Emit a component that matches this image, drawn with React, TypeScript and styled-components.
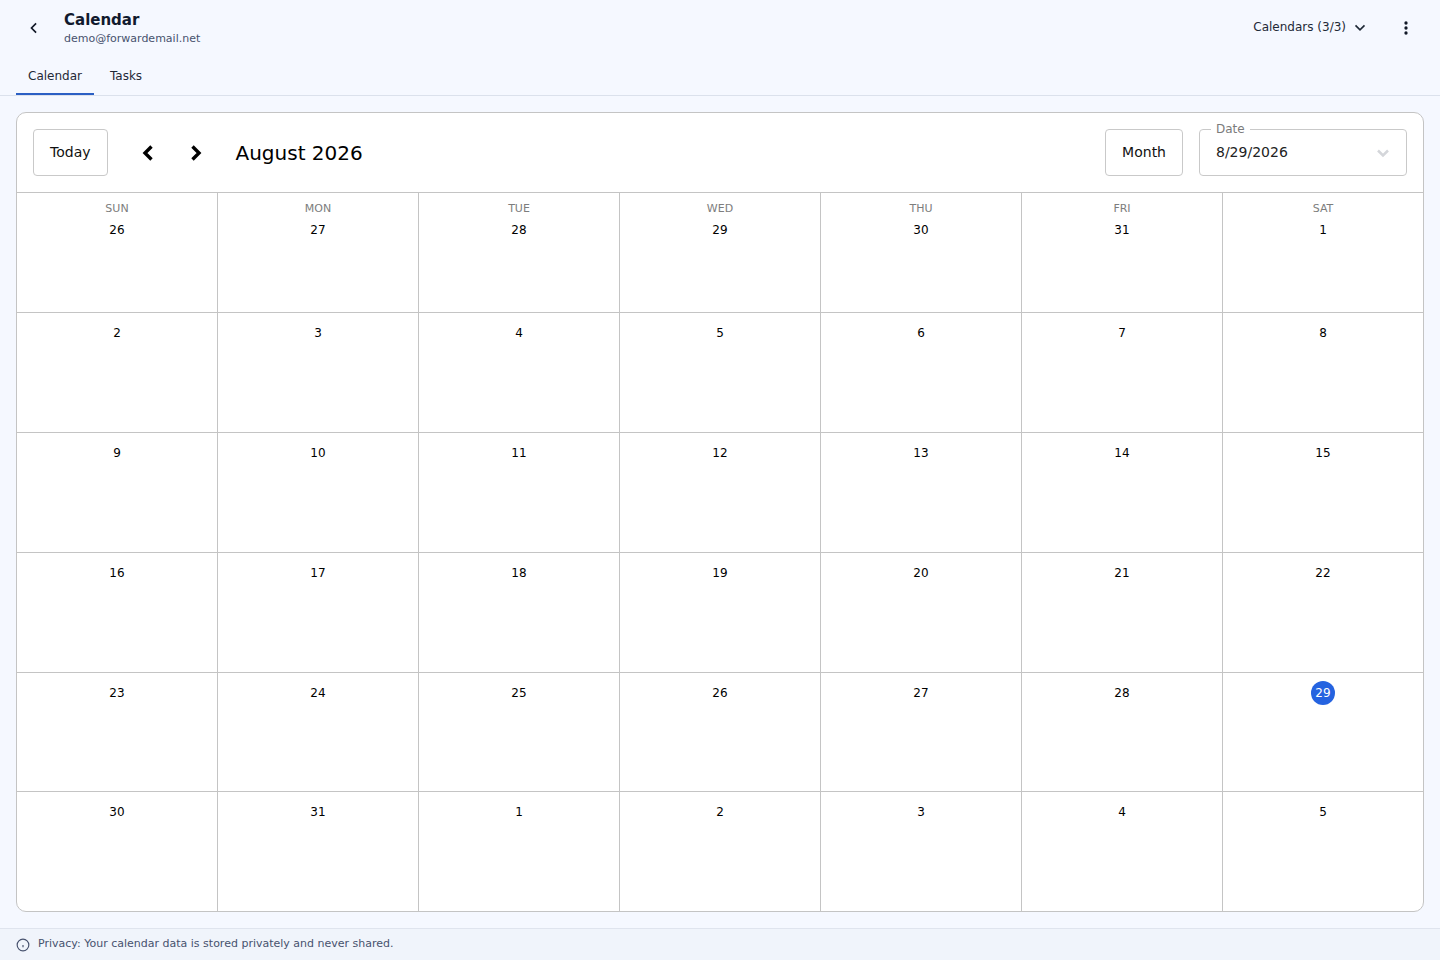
import React from 'react';
import styled, { createGlobalStyle } from 'styled-components';

const GlobalStyle = createGlobalStyle`
  html, body {
    margin: 0;
    padding: 0;
    height: 100%;
    background: #f5f8ff;
    font-family: "DejaVu Sans", sans-serif;
  }
  * {
    box-sizing: border-box;
  }
`;

const Page = styled.div`
  display: flex;
  flex-direction: column;
  width: 1440px;
  height: 960px;
  overflow: hidden;
  background: #f5f8ff;
`;

const Header = styled.header`
  height: 96px;
  flex: none;
  border-bottom: 1px solid #dbe1ec;
`;

const TopBar = styled.div`
  display: flex;
  align-items: flex-start;
  height: 56px;
  padding: 10px 16px 0 16px;
`;

const IconButton = styled.button`
  display: flex;
  align-items: center;
  justify-content: center;
  width: 36px;
  height: 36px;
  padding: 0;
  border: none;
  background: none;
  color: #111827;
`;

const TitleBlock = styled.div`
  margin-left: 12px;
  flex: 1;
`;

const Title = styled.div`
  font-size: 15px;
  line-height: 21px;
  font-weight: 700;
  color: #111a2e;
`;

const Email = styled.div`
  font-size: 11px;
  line-height: 16px;
  color: #47526e;
`;

const CalendarsButton = styled.button`
  display: flex;
  align-items: center;
  gap: 5px;
  height: 36px;
  margin-right: 11px;
  padding: 0 8px;
  border: none;
  background: none;
  font: inherit;
  font-size: 12px;
  color: #1f2937;
`;

const CalendarsLabel = styled.span`
  margin-bottom: 3px;
`;

const Tabs = styled.nav`
  display: flex;
  height: 39px;
  padding-left: 16px;
`;

const Tab = styled.div<{ $active?: boolean }>`
  display: flex;
  align-items: center;
  justify-content: center;
  height: 39px;
  padding: 3px 12px 1px;
  margin-right: ${(p) => (p.$active ? '4px' : '0')};
  font-size: 12px;
  color: #1f2937;
  border-bottom: 2px solid ${(p) => (p.$active ? '#2b5fc4' : 'transparent')};
`;

const Main = styled.main`
  flex: 1;
  padding: 16px;
  min-height: 0;
`;

const Card = styled.section`
  display: flex;
  flex-direction: column;
  height: 800px;
  background: #fff;
  border: 1px solid #c4c4c4;
  border-radius: 10px;
  overflow: hidden;
`;

const Toolbar = styled.div`
  display: flex;
  align-items: flex-start;
  height: 80px;
  flex: none;
  padding: 16px 16px 0;
  border-bottom: 1px solid #c4c4c4;
`;

const OutlineButton = styled.button`
  height: 47px;
  padding: 0 16px 2px;
  border: 1px solid #c9c9c9;
  border-radius: 4px;
  background: #fff;
  font: inherit;
  font-size: 14px;
  color: #111;
`;

const NavGroup = styled.div`
  display: flex;
  align-items: center;
  margin-left: 16px;
`;

const NavButton = styled.button`
  display: flex;
  align-items: center;
  justify-content: center;
  width: 48px;
  height: 48px;
  padding: 0;
  border: none;
  background: none;
  color: #000;
`;

const MonthTitle = styled.h2`
  flex: 1;
  margin: 10px 0 0 16px;
  font-size: 20px;
  line-height: 28px;
  font-weight: 400;
  color: #000;
`;

const DateField = styled.div`
  position: relative;
  display: flex;
  align-items: center;
  justify-content: space-between;
  width: 208px;
  height: 47px;
  margin-left: 16px;
  padding: 0 13px 0 16px;
  border: 1px solid #c9c9c9;
  border-radius: 4px;
  font-size: 14px;
  color: #222;
`;

const DateValue = styled.span`
  margin-bottom: 2px;
`;

const DateLabel = styled.span`
  position: absolute;
  top: -8px;
  left: 11px;
  padding: 0 5px;
  background: #fff;
  font-size: 12px;
  line-height: 15px;
  color: #7b7b7b;
`;

const CalendarGrid = styled.div`
  display: grid;
  flex: 1;
  grid-template-columns: repeat(7, 201px);
  grid-template-rows: 120px 120px 120px 120px 119px 119px;
  min-height: 0;
`;

const DayCell = styled.div<{ $lastCol: boolean; $lastRow: boolean }>`
  display: flex;
  flex-direction: column;
  align-items: center;
  padding-top: 8px;
  border-right: 1px solid ${(p) => (p.$lastCol ? 'transparent' : '#c4c4c4')};
  border-bottom: ${(p) => (p.$lastRow ? 'none' : '1px solid #c4c4c4')};
`;

const FirstRowCell = styled(DayCell)`
  padding-top: 1px;
`;

const Weekday = styled.div`
  height: 24px;
  padding-top: 4px;
  font-size: 11px;
  line-height: 22px;
  color: #7d7d7d;
`;

const DayNumber = styled.div<{ $today?: boolean }>`
  display: flex;
  align-items: center;
  justify-content: center;
  width: 24px;
  height: 24px;
  border-radius: 50%;
  font-size: 12px;
  color: ${(p) => (p.$today ? '#fff' : '#000')};
  background: ${(p) => (p.$today ? '#2563e0' : 'transparent')};
`;

const Footer = styled.footer`
  display: flex;
  align-items: center;
  gap: 8px;
  height: 32px;
  flex: none;
  padding: 0 16px 3px;
  background: #f0f4fb;
  border-top: 1px solid #dfe4ee;
  font-size: 11px;
  color: #47526e;
`;

const InfoIcon = styled.svg`
  margin-top: 3px;
`;

const weekdays = ['SUN', 'MON', 'TUE', 'WED', 'THU', 'FRI', 'SAT'];

const days = [
  26, 27, 28, 29, 30, 31, 1,
  2, 3, 4, 5, 6, 7, 8,
  9, 10, 11, 12, 13, 14, 15,
  16, 17, 18, 19, 20, 21, 22,
  23, 24, 25, 26, 27, 28, 29,
  30, 31, 1, 2, 3, 4, 5,
];

const TODAY_INDEX = 34;

function Chevron({ d, size, width, color }: { d: string; size: number; width: number; color?: string }) {
  return (
    <svg width={size} height={size} viewBox="0 0 24 24" fill="none" stroke={color ?? 'currentColor'} strokeWidth={width}>
      <path d={d} />
    </svg>
  );
}

export default function App() {
  return (
    <Page>
      <GlobalStyle />
      <Header>
        <TopBar>
          <IconButton aria-label="Back">
            <Chevron d="M14.5 6.5 9 12l5.5 5.5" size={20} width={2} />
          </IconButton>
          <TitleBlock>
            <Title>Calendar</Title>
            <Email>demo@forwardemail.net</Email>
          </TitleBlock>
          <CalendarsButton>
            <CalendarsLabel>Calendars (3/3)</CalendarsLabel>
            <Chevron d="M6 8.5l6 6 6-6" size={18} width={2.2} />
          </CalendarsButton>
          <IconButton aria-label="More">
            <svg width="20" height="20" viewBox="0 0 24 24" fill="currentColor">
              <circle cx="12" cy="6" r="2" />
              <circle cx="12" cy="12" r="2" />
              <circle cx="12" cy="18" r="2" />
            </svg>
          </IconButton>
        </TopBar>
        <Tabs>
          <Tab $active>Calendar</Tab>
          <Tab>Tasks</Tab>
        </Tabs>
      </Header>
      <Main>
        <Card>
          <Toolbar>
            <OutlineButton>Today</OutlineButton>
            <NavGroup>
              <NavButton aria-label="Previous month">
                <Chevron d="M15.5 5.5 9 12l6.5 6.5" size={24} width={3.4} />
              </NavButton>
              <NavButton aria-label="Next month">
                <Chevron d="M8.5 5.5 15 12l-6.5 6.5" size={24} width={3.4} />
              </NavButton>
            </NavGroup>
            <MonthTitle>August 2026</MonthTitle>
            <OutlineButton>Month</OutlineButton>
            <DateField>
              <DateLabel>Date</DateLabel>
              <DateValue>8/29/2026</DateValue>
              <Chevron d="M6 9l6 6 6-6" size={20} width={3} color="#d4d6da" />
            </DateField>
          </Toolbar>
          <CalendarGrid>
            {days.map((day, i) => {
              const lastCol = i % 7 === 6;
              const lastRow = i >= 35;
              if (i < 7) {
                return (
                  <FirstRowCell key={i} $lastCol={lastCol} $lastRow={lastRow}>
                    <Weekday>{weekdays[i]}</Weekday>
                    <DayNumber>{day}</DayNumber>
                  </FirstRowCell>
                );
              }
              return (
                <DayCell key={i} $lastCol={lastCol} $lastRow={lastRow}>
                  <DayNumber $today={i === TODAY_INDEX}>{day}</DayNumber>
                </DayCell>
              );
            })}
          </CalendarGrid>
        </Card>
      </Main>
      <Footer>
        <InfoIcon width="14" height="14" viewBox="0 0 24 24" fill="none" stroke="currentColor" strokeWidth="2">
          <circle cx="12" cy="12" r="10" />
          <path d="M12 16v-4M12 8h.01" />
        </InfoIcon>
        Privacy: Your calendar data is stored privately and never shared.
      </Footer>
    </Page>
  );
}
